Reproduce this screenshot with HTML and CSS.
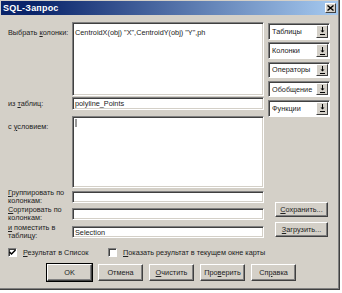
FILE: index.html
```html
<!DOCTYPE html>
<html lang="ru">
<head>
<meta charset="utf-8">
<title>SQL-Запрос</title>
<link rel="stylesheet" href="styles.css">
</head>
<body>
<div class="window">
  <div class="titlebar">
    <span class="title">SQL-Запрос</span>
    <span class="close">
      <svg width="7" height="6" viewBox="0 0 7 6"><path d="M0.5 0.5L6.5 5.5M6.5 0.5L0.5 5.5" stroke="#000" stroke-width="1.4"/></svg>
    </span>
  </div>
  <div class="content">
    <div class="top">
      <div class="fields">
        <div class="row">
          <label class="lbl pad">Выбрать <u>к</u>олонки:</label>
          <div class="box area a1">CentroidX(obj) "X",CentroidY(obj) "Y",ph</div>
        </div>
        <div class="row gap1">
          <label class="lbl mid"><span>из <u>т</u>аблиц:</span></label>
          <div class="box field f13"><span>polyline_Points</span></div>
        </div>
        <div class="row gap2">
          <label class="lbl pad">с <u>у</u>словием:</label>
          <div class="box area a2"><span class="caret"></span></div>
        </div>
      </div>
      <div class="side">
        <div class="combo"><span class="ctext">Таблицы</span><span class="cbtn"><svg width="7" height="8" viewBox="0 0 7 8"><path d="M3.5 0V4" stroke="#000"/><path d="M1.5 3.5H5.5L3.5 5.5Z" fill="#000"/><path d="M1 7.5H6" stroke="#000"/></svg></span></div>
        <div class="combo"><span class="ctext">Колонки</span><span class="cbtn"><svg width="7" height="8" viewBox="0 0 7 8"><path d="M3.5 0V4" stroke="#000"/><path d="M1.5 3.5H5.5L3.5 5.5Z" fill="#000"/><path d="M1 7.5H6" stroke="#000"/></svg></span></div>
        <div class="combo"><span class="ctext">Операторы</span><span class="cbtn"><svg width="7" height="8" viewBox="0 0 7 8"><path d="M3.5 0V4" stroke="#000"/><path d="M1.5 3.5H5.5L3.5 5.5Z" fill="#000"/><path d="M1 7.5H6" stroke="#000"/></svg></span></div>
        <div class="combo"><span class="ctext">Обобщение</span><span class="cbtn"><svg width="7" height="8" viewBox="0 0 7 8"><path d="M3.5 0V4" stroke="#000"/><path d="M1.5 3.5H5.5L3.5 5.5Z" fill="#000"/><path d="M1 7.5H6" stroke="#000"/></svg></span></div>
        <div class="combo"><span class="ctext">Функции</span><span class="cbtn"><svg width="7" height="8" viewBox="0 0 7 8"><path d="M3.5 0V4" stroke="#000"/><path d="M1.5 3.5H5.5L3.5 5.5Z" fill="#000"/><path d="M1 7.5H6" stroke="#000"/></svg></span></div>
      </div>
    </div>

    <div class="lower">
      <div class="fields">
        <div class="row">
          <label class="lbl two"><u>Г</u>руппировать по<br>колонкам:</label>
          <div class="box field f12"></div>
        </div>
        <div class="row gap3">
          <label class="lbl two"><u>С</u>ортировать по<br>колонкам:</label>
          <div class="box field f12"></div>
        </div>
        <div class="row gap4">
          <label class="lbl two"><u>и</u> поместить в<br>таблицу:</label>
          <div class="box field f12"><span>Selection</span></div>
        </div>
      </div>
      <div class="sidebtns">
        <span class="btn sbtn"><span><u>С</u>охранить...</span></span>
        <span class="btn sbtn"><span><u>З</u>агрузить...</span></span>
      </div>
    </div>

    <div class="checks">
      <span class="check c1"><span class="cbox"><svg width="7" height="7" viewBox="0 0 7 7"><path d="M0.5 3L2.5 5L6.5 1" stroke="#000" stroke-width="1.5" fill="none"/></svg></span><span><u>Р</u>езультат в Список</span></span>
      <span class="check c2"><span class="cbox"></span><span><u>П</u>оказать результат в текущем окне карты</span></span>
    </div>

    <div class="buttons">
      <span class="btn bb def"><span>OK</span></span>
      <span class="btn bb"><span>Отмена</span></span>
      <span class="btn bb"><span><u>О</u>чистить</span></span>
      <span class="btn bb"><span>Про<u>в</u>ерить</span></span>
      <span class="btn bb"><span>Сп<u>р</u>авка</span></span>
    </div>
  </div>
</div>
</body>
</html>
```

FILE: styles.css
```css
* { box-sizing: border-box; }

body {
  margin: 0;
  background: #ffffff;
  font-family: "Liberation Sans", Arial, sans-serif;
  font-size: 7.3px;
  color: #222222;
}

u { text-decoration: underline; text-underline-offset: 1px; }

.window {
  width: 340px;
  height: 290px;
  background: #d4d0c8;
  border-right: 1px solid #404040;
  border-bottom: 1px solid #404040;
  box-shadow: inset -1px -1px 0 #808080;
  padding: 1px 0 0 1px;
}

.titlebar {
  height: 14px;
  margin-right: 1px;
  background: linear-gradient(to right, #0a246a 10%, #a6caf0);
  display: flex;
  align-items: center;
  justify-content: space-between;
  padding: 0 2px 0 2px;
}

.title {
  color: #ffffff;
  font-weight: bold;
  font-size: 9px;
  letter-spacing: 0.2px;
}

.close {
  width: 11px;
  height: 10px;
  background: #d4d0c8;
  border: 1px solid;
  border-color: #ffffff #404040 #404040 #ffffff;
  display: flex;
  align-items: center;
  justify-content: center;
}

.content {
  padding: 7px 0 0 7px;
}

.top, .lower {
  display: flex;
}

.lower { margin-top: 3px; }

.fields {
  width: 256px;
  display: flex;
  flex-direction: column;
}

.row {
  display: flex;
}

.gap1 { margin-top: 1px; }
.gap2 { margin-top: 6px; }
.gap3 { margin-top: 5px; }
.gap4 { margin-top: 6px; }

.lbl {
  width: 64px;
  flex: none;
  white-space: nowrap;
}

.lbl.pad { padding-top: 6px; }
.lbl.mid { display: flex; align-items: center; }
.lbl.two { line-height: 8px; height: 12px; margin-top: -2px; }

.box {
  width: 192px;
  background: #ffffff;
  border: 1px solid;
  border-color: #808080 #ffffff #ffffff #808080;
  box-shadow: inset 1px 1px 0 #404040, inset -1px -1px 0 #d4d0c8;
  white-space: nowrap;
  overflow: hidden;
}

.area { padding: 5px 2px; }
.a1 { height: 74px; }
.a2 { height: 72px; }

.field {
  display: flex;
  align-items: center;
  padding: 0 2px;
}
.f13 { height: 13px; }
.f12 { height: 12px; }

.caret {
  display: block;
  width: 2px;
  height: 8px;
  margin-top: -3px;
  background: #9a9a9a;
}

.side {
  margin-left: 4px;
  width: 62px;
  padding-top: 1px;
  display: flex;
  flex-direction: column;
  gap: 2.75px;
}

.combo {
  height: 16.5px;
  display: flex;
  background: #ffffff;
  border: 1px solid;
  border-color: #808080 #ffffff #ffffff #808080;
  box-shadow: inset 1px 1px 0 #404040;
  padding: 1px 1px 1px 1px;
}

.ctext {
  flex: 1;
  padding-left: 2px;
  display: flex;
  align-items: center;
  white-space: nowrap;
}

.cbtn {
  width: 12px;
  background: #d4d0c8;
  border: 1px solid;
  border-color: #ffffff #404040 #404040 #ffffff;
  display: flex;
  align-items: center;
  justify-content: center;
}

.sidebtns {
  margin-left: 11px;
  padding-top: 11px;
  display: flex;
  flex-direction: column;
  gap: 5px;
}

.btn {
  display: flex;
  align-items: center;
  justify-content: center;
  background: #d4d0c8;
  border: 1px solid;
  border-color: #ffffff #404040 #404040 #ffffff;
  box-shadow: inset -1px -1px 0 #808080;
  white-space: nowrap;
}

.sbtn {
  width: 53px;
  height: 15px;
}

.checks {
  display: flex;
  margin-top: 9px;
  height: 10px;
  align-items: center;
}

.check {
  display: flex;
  align-items: center;
  gap: 6px;
}

.c1 { width: 100px; flex: none; }

.cbox {
  width: 9px;
  height: 9px;
  flex: none;
  background: #ffffff;
  border: 1px solid;
  border-color: #808080 #ffffff #ffffff #808080;
  box-shadow: inset 1px 1px 0 #404040;
  display: flex;
  align-items: center;
  justify-content: center;
}

.buttons {
  display: flex;
  gap: 6px;
  margin-top: 7px;
  padding-left: 39px;
}

.bb {
  width: 45px;
  height: 17px;
}

.def {
  outline: 1px solid #000000;
}
```
